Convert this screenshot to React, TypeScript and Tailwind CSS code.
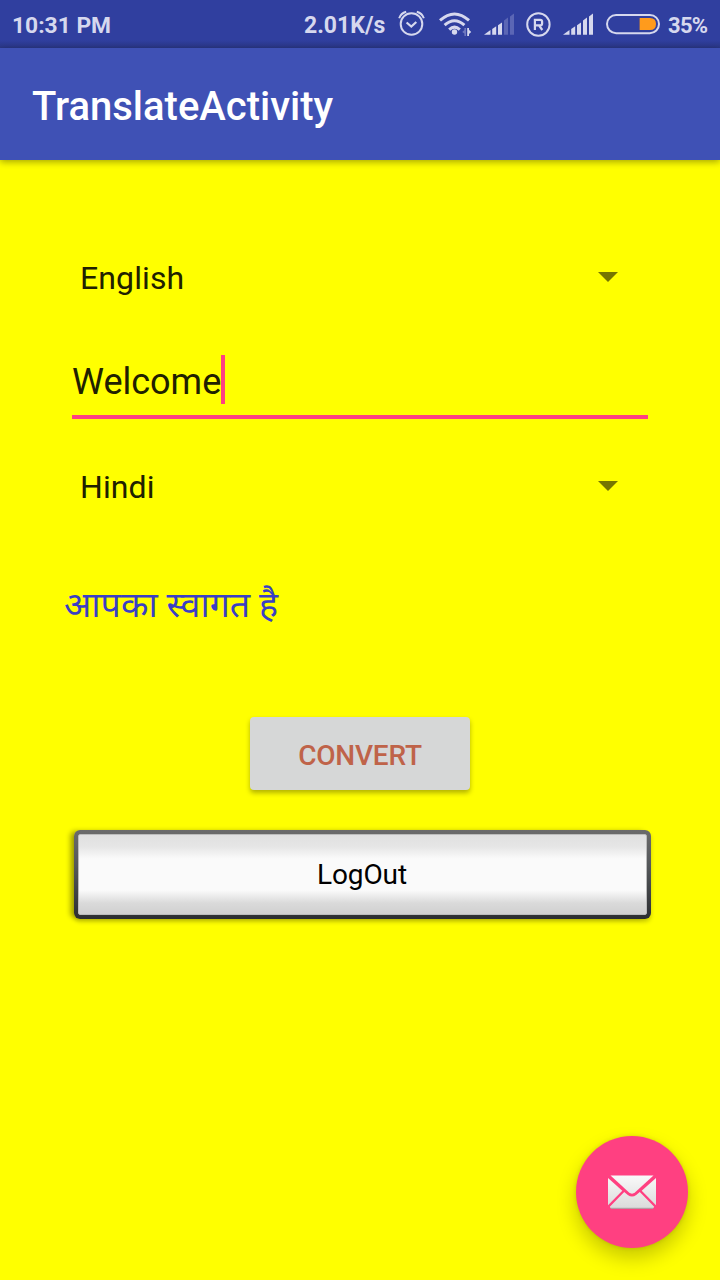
import React from "react";

function AlarmIcon() {
  return (
    <svg className="ml-[12px] h-[48px] w-[27px] shrink-0" viewBox="0 0 27 48" fill="none" stroke="#d6d8ee" strokeWidth="2">
      <circle cx="13.5" cy="24" r="10.8" />
      <path d="M8.6 22.5l4.7 4 5-4.5" strokeWidth="2.2" />
      <path d="M1.2 18.2C2.2 15 4.6 12.7 8.2 11.7M25.8 18.2C24.8 15 22.4 12.7 18.8 11.7" />
    </svg>
  );
}

function WifiIcon() {
  return (
    <svg className="ml-[14px] h-[48px] w-[33px] shrink-0" viewBox="0 0 33 48" fill="none" stroke="#d6d8ee" strokeWidth="3">
      <path d="M1 20.4Q15.5 7.5 30 20.4" />
      <path d="M5.6 25.2Q15.5 16.4 25.4 25.2" />
      <path d="M10.2 29.6Q15.5 24.6 20.8 29.6" />
      <circle cx="15.5" cy="32" r="2.7" fill="#d6d8ee" stroke="none" />
      <path d="M27 28v8h-1.600v-2.400L23.200 32l2.200-2V28z" fill="#6f78bf" stroke="none" />
      <path d="M28.200 28h1.800v1.800l2.200 2.200L30 34v2h-1.800z" fill="#d6d8ee" stroke="none" />
    </svg>
  );
}

function SignalIcon({ level }: { level: number }) {
  const bars = [
    "M0 34.800l6.500-4.800v4.800z",
    "M8.200 29l4-2.800v8.600h-4z",
    "M14 25.200l4-2.800v12.400h-4z",
    "M20 20.500l4-3v17.300h-4z",
    "M26 16.400l4-3v21.400h-4z",
  ];
  return (
    <svg className="h-[48px] w-[30px] shrink-0" viewBox="0 0 30 48">
      {bars.map((d, i) => (
        <path key={i} d={d} fill={i < level ? "#d6d8ee" : "#5b66b5"} />
      ))}
    </svg>
  );
}

function RoamingIcon() {
  return (
    <svg className="ml-[12px] mr-[12px] h-[48px] w-[25px] shrink-0" viewBox="0 0 25 48" fill="none" stroke="#d6d8ee" strokeWidth="2.2">
      <circle cx="12.4" cy="24.5" r="11.2" strokeWidth="2" />
      <path d="M8.900 30V19.800h5.400q1.800 0 1.800 1.800v1.900q0 1.800-1.800 1.800H9M13 25.300l3.300 4.700" />
    </svg>
  );
}

function BatteryIcon() {
  return (
    <svg className="ml-[13px] h-[48px] w-[54px] shrink-0" viewBox="0 0 54 48">
      <rect x="1" y="15" width="52" height="18.2" rx="9.1" fill="none" stroke="#d6d8ee" strokeWidth="2" />
      <path d="M33.600 18H44q6 0 6 6t-6 6H33.600z" fill="#ff9b1c" />
    </svg>
  );
}

function Spinner({ label }: { label: string }) {
  return (
    <div className="flex h-[48px] items-center justify-between pl-[16px] pr-[38px] text-[32px] text-[#202000]">
      <span className="tracking-[0.1px]">{label}</span>
      <svg className="mb-[2px] h-[10px] w-[20px]" viewBox="0 0 20 10">
        <path d="M0 0h20L10 10z" fill="#757500" />
      </svg>
    </div>
  );
}

export default function App() {
  return (
    <div className="flex h-[1280px] w-[720px] flex-col overflow-hidden bg-[#ffff00] font-['Roboto','Noto_Sans_Devanagari','Noto_Sans',sans-serif]">
      <div className="flex h-[48px] shrink-0 items-center bg-[linear-gradient(#303f9f_40px,#2a3786_48px)] pl-[12px] text-[22.8px] font-bold text-[#d6d8ee]">
        <span className="w-[292px] pt-[4px]">10:31 PM</span>
        <span className="w-[82px] whitespace-nowrap pt-[4px] text-[23px]">2.01K/s</span>
        <AlarmIcon />
        <WifiIcon />
        <div className="ml-[12px] flex">
          <SignalIcon level={3} />
        </div>
        <RoamingIcon />
        <SignalIcon level={5} />
        <BatteryIcon />
        <span className="ml-[8px] pt-[2px] text-[22px] tracking-[-0.7px]">35%</span>
      </div>

      <header className="flex h-[112px] shrink-0 items-center bg-[#3f51b5] pl-[32px] pt-[6px] text-[40px] font-medium text-white shadow-[0_2px_7px_rgba(0,0,0,0.35)]">
        TranslateActivity
      </header>

      <main className="flex flex-col px-[64px] pt-[94px]">
        <Spinner label="English" />

        <div className="mx-[8px] mt-[53px] flex h-[64px] items-start border-b-4 border-[#ff4081] text-[36px] leading-[55px] text-[#202000]">
          <span>Welcome</span>
          <span className="h-[49px] w-[4px] bg-[#ff4081]" />
        </div>

        <div className="mt-[44px]">
          <Spinner label="Hindi" />
        </div>

        <div className="mt-[69px] h-[51px] text-[35.8px] leading-[50px] text-[#3a3fc4]">आपका स्वागत है</div>

        <button className="mt-[86px] h-[73px] w-[220px] self-center rounded-[4px] bg-[#d6d7d7] pt-[4px] text-[28px] font-medium tracking-[-0.2px] text-[#bf6349] shadow-[0_3px_5px_rgba(0,0,0,0.3)]">
          CONVERT
        </button>

        <button className="ml-[10px] mt-[40px] h-[89px] w-[577px] rounded-[6px] bg-[linear-gradient(#6b6b6b,#55585a_40%,#2c2e31)] p-[4px] text-[28px] text-black shadow-[-5px_0_5px_-1px_rgba(0,0,0,0.3),0_3px_4px_rgba(0,0,0,0.2)]">
          <span className="flex h-full items-center justify-center rounded-[2px] border border-[#bcbcbc] bg-[linear-gradient(#e0e0e0,#e6e6e6_15%,#fafafa_30%,#fafafa_70%,#dadada_86%,#d0d0d0)] pr-[1px] tracking-[-0.1px]">
            LogOut
          </span>
        </button>
      </main>

      <button className="mb-[32px] mr-[32px] mt-auto flex size-[112px] shrink-0 items-center justify-center self-end rounded-full bg-[#ff4081] shadow-[0_10px_20px_rgba(0,0,0,0.22),0_0_4px_rgba(0,0,0,0.12)]">
        <svg className="h-[34px] w-[48px]" viewBox="0 0 48 34">
          <defs>
            <linearGradient id="paper" x1="0" y1="0" x2="0" y2="34" gradientUnits="userSpaceOnUse">
              <stop offset="0" stopColor="#fafafa" />
              <stop offset="1" stopColor="#dadada" />
            </linearGradient>
          </defs>
          <g fill="url(#paper)">
            <path d="M2.500 0.500h43L27.200 17.200q-3.200 2.900-6.400 0z" />
            <path d="M0 3L14.300 15.800 0 30.200z" />
            <path d="M48 3L33.700 15.800 48 30.200z" />
            <path d="M16.200 17l3.600 3q4.200 3 8.400 0l3.600-3L46.200 31.800 45 33.500H3L1.800 31.800z" />
          </g>
          <path d="M3 33.300h42" stroke="#a7a0a2" />
        </svg>
      </button>
    </div>
  );
}
